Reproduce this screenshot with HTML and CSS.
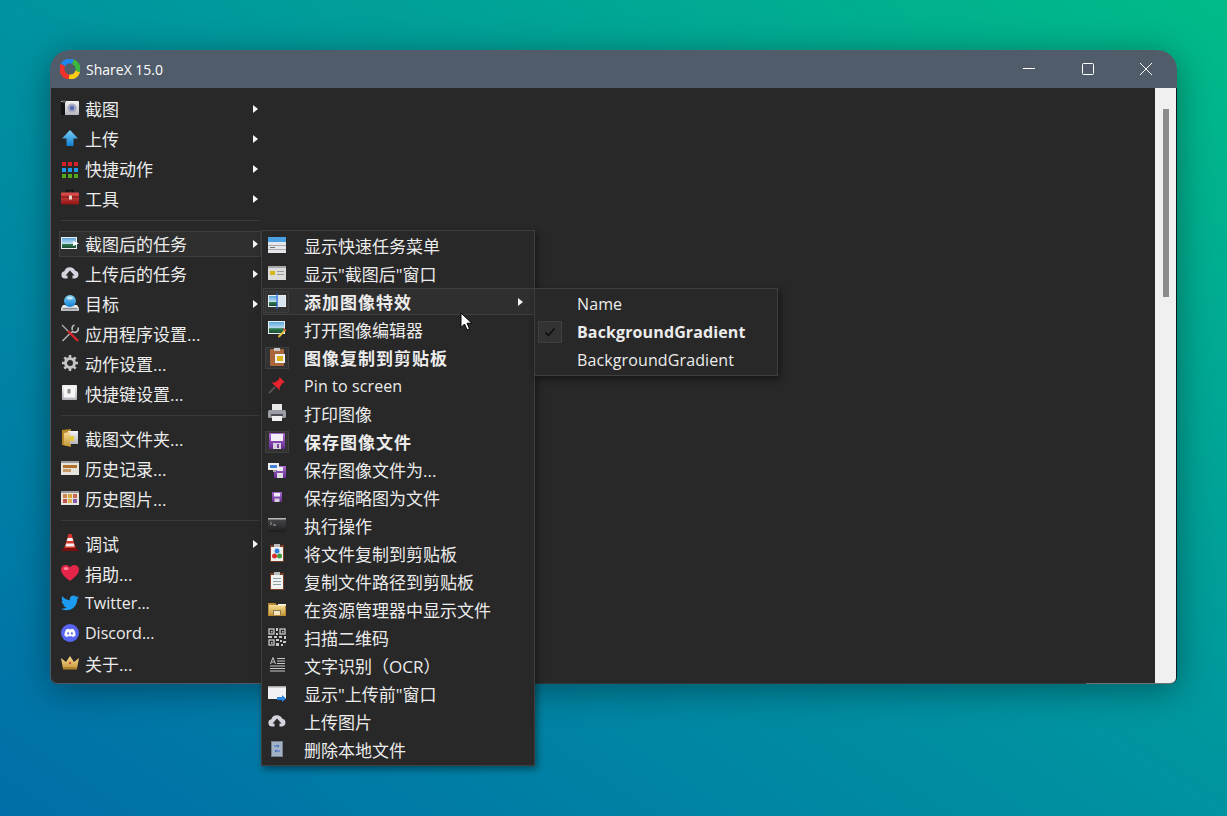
FILE: index.html
```html
<!DOCTYPE html>
<html lang="zh">
<head>
<meta charset="utf-8">
<title>ShareX 15.0</title>
<link rel="stylesheet" href="styles.css">
</head>
<body>
<svg class="defs" xmlns="http://www.w3.org/2000/svg">
  <defs>
    <linearGradient id="gBlue" x1="0" y1="0" x2="0" y2="1"><stop offset="0" stop-color="#7fd0f5"/><stop offset="1" stop-color="#0f7fd4"/></linearGradient>
    <linearGradient id="gSilver" x1="0" y1="0" x2="0" y2="1"><stop offset="0" stop-color="#f4f4f6"/><stop offset="1" stop-color="#b4b6bc"/></linearGradient>
    <linearGradient id="gPic" x1="0" y1="0" x2="0" y2="1"><stop offset="0" stop-color="#5aa8dc"/><stop offset=".55" stop-color="#bcdcec"/><stop offset=".6" stop-color="#2f7f4f"/><stop offset="1" stop-color="#1c4a34"/></linearGradient>
    <linearGradient id="gRed" x1="0" y1="0" x2="0" y2="1"><stop offset="0" stop-color="#e0504f"/><stop offset="1" stop-color="#8e1414"/></linearGradient>
    <linearGradient id="gPurple" x1="0" y1="0" x2="0" y2="1"><stop offset="0" stop-color="#a96bd0"/><stop offset="1" stop-color="#642a90"/></linearGradient>
    <linearGradient id="gFolder" x1="0" y1="0" x2="0" y2="1"><stop offset="0" stop-color="#f6dc94"/><stop offset="1" stop-color="#c89a3c"/></linearGradient>
    <linearGradient id="gTerm" x1="0" y1="0" x2="0" y2="1"><stop offset="0" stop-color="#4a4a4c"/><stop offset="1" stop-color="#1e1e20"/></linearGradient>

    <symbol id="i-cam" viewBox="0 0 18 18"><rect x="0" y="2" width="18" height="14" rx="1" fill="url(#gSilver)"/><rect x="0" y="3" width="4" height="13" fill="#141414"/><rect x="1" y="1.500" width="4" height="2" fill="#666"/><circle cx="11" cy="9" r="4.500" fill="#a6a8c0"/><circle cx="11" cy="9" r="2.200" fill="#5a68b8"/></symbol>
    <symbol id="i-up" viewBox="0 0 18 18"><path d="M9 1 17 9.500H12.500V17H5.500V9.500H1Z" fill="url(#gBlue)"/></symbol>
    <symbol id="i-grid" viewBox="0 0 18 18"><g fill="#d8202c"><rect x="1" y="1" width="4" height="4"/><rect x="7" y="1" width="4" height="4"/><rect x="13" y="1" width="4" height="4"/></g><g fill="#1d9bea"><rect x="1" y="7" width="4" height="4"/><rect x="7" y="7" width="4" height="4"/><rect x="13" y="7" width="4" height="4"/></g><g fill="#55a81e"><rect x="1" y="13" width="4" height="4"/><rect x="7" y="13" width="4" height="4"/><rect x="13" y="13" width="4" height="4"/></g></symbol>
    <symbol id="i-box" viewBox="0 0 18 18"><path d="M6 4V1.500H12V4" fill="none" stroke="#111" stroke-width="1.500"/><rect x="0" y="3.500" width="18" height="12" rx="1" fill="url(#gRed)"/><rect x="0" y="7.500" width="18" height="1" fill="#6e0f0f"/><rect x="8" y="6.500" width="3" height="4" fill="#e8d8c8"/></symbol>
    <symbol id="i-after" viewBox="0 0 18 18"><rect x="0" y="3" width="16" height="12" fill="#e8eef2"/><rect x="1" y="4" width="14" height="10" fill="url(#gPic)"/><path d="M12 7 18 9.500 12 12Z" fill="#fff"/></symbol>
    <symbol id="i-cloud" viewBox="0 0 18 18"><path d="M4 14.500A3.700 3.700 0 0 1 3.300 7.200 5.900 5.900 0 0 1 14.300 6.800 3.900 3.900 0 0 1 14 14.500H11.500V11.500H13.500L9 6.500 4.500 11.500H6.500V14.500Z" fill="#d4d4de"/></symbol>
    <symbol id="i-dest" viewBox="0 0 18 18"><path d="M2 11H16L18 14V17H0V14Z" fill="url(#gSilver)"/><rect x="2" y="14" width="14" height="1.200" fill="#8a8c92"/><circle cx="9" cy="7" r="6" fill="url(#gBlue)"/><ellipse cx="9" cy="4" rx="3" ry="1.600" fill="#bfe6fa"/></symbol>
    <symbol id="i-tools" viewBox="0 0 18 18"><path d="M1 1 8 8" stroke="#b0b0b4" stroke-width="1.200" fill="none"/><path d="M9.500 9 1.500 17" stroke="#b5b5b5" stroke-width="1.500" fill="none"/><path d="M17 3.500A3.500 3.500 0 0 1 11.500 7.500L9.500 9.500M13.500 1A3.500 3.500 0 0 0 11.500 6" stroke="#c0c0c4" stroke-width="1.600" fill="none"/><path d="M7 7 17 17" stroke="#d8242c" stroke-width="2.400"/></symbol>
    <symbol id="i-gear" viewBox="0 0 18 18"><circle cx="9" cy="9" r="4.500" fill="none" stroke="#c4c4c4" stroke-width="3"/><path d="M9 1V4M9 14V17M1 9H4M14 9H17M3.300 3.300 5.500 5.500M14.700 3.300 12.500 5.500M3.300 14.700 5.500 12.500M14.700 14.700 12.500 12.500" stroke="#c4c4c4" stroke-width="2.600"/></symbol>
    <symbol id="i-key" viewBox="0 0 18 18"><rect x="1" y="1" width="15" height="15" rx="1" fill="url(#gSilver)"/><rect x="3" y="2.500" width="11" height="11" fill="#f6f6f6"/><rect x="6.500" y="5" width="3" height="4.500" fill="#8c8c8c"/></symbol>
    <symbol id="i-folder" viewBox="0 0 18 18"><path d="M1 1 10 0V18L1 16Z" fill="#b88a2c"/><rect x="7" y="2" width="10" height="13" fill="url(#gSilver)"/><path d="M3 4 9 3V17L3 16Z" fill="url(#gFolder)"/><rect x="9" y="7" width="4" height="5" fill="#e2c93a"/></symbol>
    <symbol id="i-hist" viewBox="0 0 18 18"><rect x="0" y="2" width="18" height="14" fill="#e6e3dc"/><rect x="0" y="2" width="18" height="2" fill="#9a9a9a"/><rect x="2" y="6" width="14" height="3" fill="#b0702a"/><rect x="2" y="10" width="8" height="3" fill="#c89a68"/></symbol>
    <symbol id="i-himg" viewBox="0 0 18 18"><rect x="0" y="2" width="18" height="14" fill="#e6e3dc"/><rect x="0" y="2" width="18" height="2" fill="#9a9a9a"/><rect x="2" y="5" width="4" height="4" fill="#d08850"/><rect x="7" y="5" width="4" height="4" fill="#d8a838"/><rect x="12" y="5" width="4" height="4" fill="#c86a52"/><rect x="2" y="10" width="4" height="4" fill="#c05450"/><rect x="7" y="10" width="4" height="4" fill="#dcb04c"/><rect x="12" y="10" width="4" height="4" fill="#8a58a8"/></symbol>
    <symbol id="i-cone" viewBox="0 0 18 18"><path d="M7.500 0H10.500L15 15H3Z" fill="#d83a30"/><path d="M6.600 4H11.400L12.200 7H5.800ZM5.200 9.500H12.800L13.500 12.500H4.500Z" fill="#f2f2f2"/><path d="M0 17 3 14H15L18 17Z" fill="#7c0e0e"/></symbol>
    <symbol id="i-heart" viewBox="0 0 18 18"><path d="M9 17C4 13 0 10 0 5.500 0 2.500 2.200 1 4.500 1 6.500 1 8.200 2 9 3.500 9.800 2 11.500 1 13.500 1 15.800 1 18 2.500 18 5.500 18 10 14 13 9 17Z" fill="#e5254a"/><ellipse cx="5" cy="4.500" rx="2.500" ry="1.500" fill="#f6899c"/></symbol>
    <symbol id="i-tw" viewBox="0 0 24 24"><path fill="#1d9bf0" d="M23.953 4.57a10 10 0 01-2.825.775 4.958 4.958 0 002.163-2.723c-.951.555-2.005.959-3.127 1.184a4.92 4.92 0 00-8.384 4.482C7.69 8.095 4.067 6.13 1.64 3.162a4.822 4.822 0 00-.666 2.475c0 1.71.87 3.213 2.188 4.096a4.904 4.904 0 01-2.228-.616v.06a4.923 4.923 0 003.946 4.827 4.996 4.996 0 01-2.212.085 4.936 4.936 0 004.604 3.417 9.867 9.867 0 01-6.102 2.105c-.39 0-.779-.023-1.17-.067a13.995 13.995 0 007.557 2.209c9.053 0 13.998-7.496 13.998-13.985 0-.21 0-.42-.015-.63A9.935 9.935 0 0024 4.59z"/></symbol>
    <symbol id="i-dc" viewBox="0 0 36 36"><circle cx="18" cy="18" r="18" fill="#5865f2"/><g transform="translate(7 7) scale(.92)"><path fill="#fff" d="M20.317 4.3698a19.7913 19.7913 0 00-4.8851-1.5152.0741.0741 0 00-.0785.0371c-.211.3753-.4447.8648-.6083 1.2495-1.8447-.2762-3.68-.2762-5.4868 0-.1636-.3933-.4058-.8742-.6177-1.2495a.077.077 0 00-.0785-.037 19.7363 19.7363 0 00-4.8852 1.515.0699.0699 0 00-.0321.0277C.5334 9.0458-.319 13.5799.0992 18.0578a.0824.0824 0 00.0312.0561c2.0528 1.5076 4.0413 2.4228 5.9929 3.0294a.0777.0777 0 00.0842-.0276c.4616-.6304.8731-1.2952 1.226-1.9942a.076.076 0 00-.0416-.1057c-.6528-.2476-1.2743-.5495-1.8722-.8923a.077.077 0 01-.0076-.1277c.1258-.0943.2517-.1923.3718-.2914a.0743.0743 0 01.0776-.0105c3.9278 1.7933 8.18 1.7933 12.0614 0a.0739.0739 0 01.0785.0095c.1202.099.246.1981.3728.2924a.077.077 0 01-.0066.1276 12.2986 12.2986 0 01-1.873.8914.0766.0766 0 00-.0407.1067c.3604.698.7719 1.3628 1.225 1.9932a.076.076 0 00.0842.0286c1.961-.6067 3.9495-1.5219 6.0023-3.0294a.077.077 0 00.0313-.0552c.5004-5.177-.8382-9.6739-3.5485-13.6604a.061.061 0 00-.0312-.0286zM8.02 15.3312c-1.1825 0-2.1569-1.0857-2.1569-2.419 0-1.3332.9555-2.4189 2.157-2.4189 1.2108 0 2.1757 1.0952 2.1568 2.419 0 1.3332-.9555 2.4189-2.1569 2.4189zm7.9748 0c-1.1825 0-2.1569-1.0857-2.1569-2.419 0-1.3332.9554-2.4189 2.1569-2.4189 1.2108 0 2.1757 1.0952 2.1568 2.419 0 1.3332-.946 2.4189-2.1568 2.4189Z"/></g></symbol>
    <symbol id="i-crown" viewBox="0 0 18 18"><path d="M2 15 0 4 5 8 9 2 13 8 18 4 16 15Z" fill="url(#gFolder)"/><rect x="2" y="13" width="14" height="2.500" fill="#b0822c"/><circle cx="9" cy="9" r="1.200" fill="#d84a3a"/></symbol>

    <symbol id="i-quick" viewBox="0 0 18 18"><rect x="0" y="1" width="18" height="16" fill="#e4e6ea"/><rect x="0" y="1" width="18" height="5" fill="#4aa0e0"/><rect x="0" y="9" width="18" height="1" fill="#a8aab0"/><rect x="0" y="13" width="18" height="1" fill="#a8aab0"/><rect x="2" y="11" width="5" height="1" fill="#777"/></symbol>
    <symbol id="i-awin" viewBox="0 0 18 18"><rect x="0" y="2" width="18" height="14" fill="#dcdcd8"/><rect x="0" y="2" width="18" height="2" fill="#a8a8a8"/><rect x="2" y="7" width="5" height="4" fill="#d8b418"/><rect x="9" y="7" width="7" height="1" fill="#999"/><rect x="9" y="10" width="7" height="1" fill="#999"/></symbol>
    <symbol id="i-fx" viewBox="0 0 18 18"><rect x="0" y="3" width="18" height="12" fill="#e8eef2"/><rect x="1" y="4" width="16" height="10" fill="url(#gPic)"/><rect x="9" y="4" width="8" height="10" fill="#d8e4ee"/><rect x="8.500" y="1" width="1.200" height="16" fill="#2a62d8"/></symbol>
    <symbol id="i-edit" viewBox="0 0 18 18"><rect x="0" y="1" width="17" height="13" fill="#e8eef2"/><rect x="1" y="2" width="15" height="11" fill="url(#gPic)"/><path d="M17 9 18 10.500 12 17 10 17.800 10.500 15.500Z" fill="#e2c23c"/><path d="M16 8 18 10 17 11 15 9.500Z" fill="#d84a3a"/></symbol>
    <symbol id="i-clip" viewBox="0 0 18 18"><rect x="2" y="1" width="14" height="17" rx="1" fill="#a9663a"/><rect x="6" y="0" width="6" height="3" fill="#c8c8c8"/><rect x="7" y="6" width="10" height="9" fill="#f0f0f0"/><rect x="9" y="8" width="6" height="5" fill="#d8b418"/></symbol>
    <symbol id="i-pin" viewBox="0 0 18 18"><path d="M1 17 7 11" stroke="#555" stroke-width="1.800"/><path d="M11.500 1 17 6.500 14.500 7 11.500 11.500 12 14.500 3.500 6.500 6.500 6.500 11 3.500Z" fill="#e8232e"/></symbol>
    <symbol id="i-print" viewBox="0 0 18 18"><rect x="4" y="0" width="10" height="7" fill="#e8e8e8"/><rect x="0" y="6" width="18" height="8" rx="1.500" fill="#9a9da4"/><rect x="3" y="10" width="12" height="2" fill="#4c4e54"/><rect x="4" y="12" width="10" height="5" fill="#eef0f2"/></symbol>
    <symbol id="i-save" viewBox="0 0 18 18"><rect x="1" y="1" width="16" height="16" rx="1" fill="url(#gPurple)"/><rect x="3" y="2" width="12" height="7" fill="#f4eef8"/><rect x="5" y="11" width="8" height="6" fill="#d8d0e0"/><rect x="9" y="12" width="2" height="4" fill="#7a4a9a"/></symbol>
    <symbol id="i-saveas" viewBox="0 0 18 18"><rect x="6" y="6" width="12" height="12" fill="url(#gPurple)"/><rect x="9" y="7" width="6" height="4" fill="#eee"/><rect x="9" y="13" width="6" height="5" fill="#ddd"/><rect x="0" y="3" width="11" height="7" fill="#f0f0f0"/><rect x="2" y="5" width="7" height="3" fill="#3f82d8"/><rect x="5" y="10" width="3" height="2" fill="#aaa"/></symbol>
    <symbol id="i-thumb" viewBox="0 0 18 18"><rect x="4" y="4" width="10" height="10" rx="1" fill="url(#gPurple)"/><rect x="6" y="5" width="6" height="3.500" fill="#f0eaf6"/><rect x="6.500" y="10.500" width="5" height="3.500" fill="#d8d0e0"/></symbol>
    <symbol id="i-term" viewBox="0 0 18 18"><rect x="0" y="2" width="18" height="14" fill="url(#gTerm)"/><rect x="0" y="2" width="18" height="1.500" fill="#b8b8b8"/><path d="M2 6 4 7.500 2 9" stroke="#aaa" fill="none" stroke-width=".8"/><rect x="5" y="8.500" width="3" height="1" fill="#aaa"/></symbol>
    <symbol id="i-filec" viewBox="0 0 18 18"><rect x="2" y="1" width="14" height="17" fill="#7a3e22"/><rect x="3" y="3" width="12" height="14" fill="#f2f2f2"/><rect x="6" y="0" width="6" height="3" fill="#bcbcbc"/><circle cx="9" cy="7" r="2.500" fill="#2f7fd8"/><circle cx="6.500" cy="12" r="2.500" fill="#d83030"/><circle cx="11.500" cy="12" r="2.500" fill="#3f9a3a"/></symbol>
    <symbol id="i-pathc" viewBox="0 0 18 18"><rect x="2" y="1" width="14" height="17" fill="#7a3e22"/><rect x="3" y="3" width="12" height="14" fill="#f2f2f2"/><rect x="6" y="0" width="6" height="3" fill="#bcbcbc"/><g fill="#8aa0a8"><rect x="5" y="6" width="8" height="1"/><rect x="5" y="9" width="8" height="1"/><rect x="5" y="12" width="8" height="1"/></g></symbol>
    <symbol id="i-explorer" viewBox="0 0 18 18"><path d="M0 3H7L9 5H18V16H0Z" fill="#b88a34"/><rect x="1" y="5" width="16" height="10" fill="url(#gFolder)"/><rect x="5" y="10" width="8" height="5" fill="#8d7a50"/><rect x="6" y="11" width="6" height="4" fill="#f4e6c0"/><rect x="10" y="4" width="8" height="1.600" fill="#f6f6f0"/></symbol>
    <symbol id="i-qr" viewBox="0 0 18 18"><g fill="none" stroke="#c8c8c8" stroke-width="1.300"><rect x="1" y="1" width="5" height="5"/><rect x="12" y="1" width="5" height="5"/><rect x="1" y="12" width="5" height="5"/></g><g fill="#c8c8c8"><rect x="3" y="3" width="1.500" height="1.500"/><rect x="14" y="3" width="1.500" height="1.500"/><rect x="3" y="14" width="1.500" height="1.500"/><rect x="8" y="0" width="2" height="3"/><rect x="8" y="5" width="2" height="2"/><rect x="0" y="8" width="4" height="2"/><rect x="6" y="8" width="3" height="2"/><rect x="11" y="8" width="3" height="2"/><rect x="16" y="8" width="2" height="3"/><rect x="8" y="11" width="3" height="2"/><rect x="12" y="12" width="2" height="2"/><rect x="15" y="13" width="3" height="2"/><rect x="8" y="15" width="3" height="3"/><rect x="13" y="16" width="2" height="2"/></g></symbol>
    <symbol id="i-ocr" viewBox="0 0 18 18"><path d="M2.500 8 5 1.500 7.500 8M3.500 6H6.500" fill="none" stroke="#c8c8c8" stroke-width="1"/><g fill="#c8c8c8"><rect x="9" y="2" width="8" height="1"/><rect x="9" y="4.500" width="8" height="1"/><rect x="9" y="7" width="8" height="1"/><rect x="2" y="9.500" width="15" height="1"/><rect x="2" y="12" width="15" height="1"/><rect x="2" y="14.500" width="15" height="1"/></g></symbol>
    <symbol id="i-prewin" viewBox="0 0 18 18"><rect x="0" y="2" width="18" height="13" fill="#f0f2f6"/><rect x="0" y="2" width="18" height="1.500" fill="#a8a8a8"/><path d="M9 13H14V11L18 14.500 14 18V16H9Z" fill="#2a86e0"/></symbol>
    <symbol id="i-del" viewBox="0 0 18 18"><rect x="3" y="1" width="12" height="16" fill="#74808e"/><rect x="4" y="2" width="10" height="14" fill="#a4b2c6"/><path d="M6 6H11M11 6 9.500 5M11 6 9.500 7M12 11H7M7 11 8.500 10M7 11 8.500 12" stroke="#3060c8" stroke-width=".9" fill="none"/></symbol>
  </defs>
</svg>

<div class="window">
  <header class="titlebar">
    <svg class="logo" viewBox="0 0 20 20" aria-hidden="true">
      <g fill="none" stroke-width="5">
        <path d="M3 6A8 8 0 0 1 13 2.600" stroke="#1e88f0"/>
        <path d="M13 2.600A8 8 0 0 1 17.700 12.500" stroke="#3cb83e"/>
        <path d="M17.700 12.500A8 8 0 0 1 9 18" stroke="#ffcb14"/>
        <path d="M9 18A8 8 0 0 1 3 6" stroke="#f0322a"/>
      </g>
    </svg>
    <span class="title">ShareX 15.0</span>
    <div class="controls">
      <span class="ctl"><svg width="14" height="14" viewBox="0 0 14 14"><path d="M1 6.500H13" stroke="#fff"/></svg></span>
      <span class="ctl"><svg width="14" height="14" viewBox="0 0 14 14"><rect x="1.500" y="1.500" width="11" height="11" rx="1" fill="none" stroke="#fff"/></svg></span>
      <span class="ctl"><svg width="14" height="14" viewBox="0 0 14 14"><path d="M1 1 13 13M13 1 1 13" stroke="#fff"/></svg></span>
    </div>
  </header>

  <div class="client">
    <nav class="mainmenu">
      <div class="row"><svg class="ic"><use href="#i-cam"/></svg><span>截图</span><i class="tri"></i></div>
      <div class="row"><svg class="ic"><use href="#i-up"/></svg><span>上传</span><i class="tri"></i></div>
      <div class="row"><svg class="ic low"><use href="#i-grid"/></svg><span>快捷动作</span><i class="tri"></i></div>
      <div class="row"><svg class="ic"><use href="#i-box"/></svg><span>工具</span><i class="tri"></i></div>
      <div class="sep"></div>
      <div class="row on"><svg class="ic"><use href="#i-after"/></svg><span>截图后的任务</span><i class="tri"></i></div>
      <div class="row"><svg class="ic"><use href="#i-cloud"/></svg><span>上传后的任务</span><i class="tri"></i></div>
      <div class="row"><svg class="ic"><use href="#i-dest"/></svg><span>目标</span><i class="tri"></i></div>
      <div class="row"><svg class="ic"><use href="#i-tools"/></svg><span>应用程序设置...</span></div>
      <div class="row"><svg class="ic"><use href="#i-gear"/></svg><span>动作设置...</span></div>
      <div class="row"><svg class="ic"><use href="#i-key"/></svg><span>快捷键设置...</span></div>
      <div class="sep"></div>
      <div class="row"><svg class="ic"><use href="#i-folder"/></svg><span>截图文件夹...</span></div>
      <div class="row"><svg class="ic"><use href="#i-hist"/></svg><span>历史记录...</span></div>
      <div class="row"><svg class="ic"><use href="#i-himg"/></svg><span>历史图片...</span></div>
      <div class="sep"></div>
      <div class="row"><svg class="ic"><use href="#i-cone"/></svg><span>调试</span><i class="tri"></i></div>
      <div class="row"><svg class="ic"><use href="#i-heart"/></svg><span>捐助...</span></div>
      <div class="row"><svg class="ic"><use href="#i-tw"/></svg><span class="en">Twitter...</span></div>
      <div class="row"><svg class="ic"><use href="#i-dc"/></svg><span class="en">Discord...</span></div>
      <div class="row"><svg class="ic"><use href="#i-crown"/></svg><span>关于...</span></div>
    </nav>
    <main class="canvas"></main>
    <div class="scrollbar"><div class="thumb"></div></div>
  </div>

  <div class="popup tasks">
    <div class="mi"><b class="box"><svg class="ic"><use href="#i-quick"/></svg></b><span>显示快速任务菜单</span></div>
    <div class="mi"><b class="box"><svg class="ic"><use href="#i-awin"/></svg></b><span>显示"截图后"窗口</span></div>
    <div class="mi on"><b class="box chk"><svg class="ic"><use href="#i-fx"/></svg></b><span class="bold cjk">添加图像特效</span><i class="tri"></i></div>
    <div class="mi"><b class="box"><svg class="ic"><use href="#i-edit"/></svg></b><span>打开图像编辑器</span></div>
    <div class="mi"><b class="box chk"><svg class="ic"><use href="#i-clip"/></svg></b><span class="bold cjk">图像复制到剪贴板</span></div>
    <div class="mi"><b class="box"><svg class="ic"><use href="#i-pin"/></svg></b><span class="en wide">Pin to screen</span></div>
    <div class="mi"><b class="box"><svg class="ic"><use href="#i-print"/></svg></b><span>打印图像</span></div>
    <div class="mi"><b class="box chk"><svg class="ic"><use href="#i-save"/></svg></b><span class="bold cjk">保存图像文件</span></div>
    <div class="mi"><b class="box"><svg class="ic"><use href="#i-saveas"/></svg></b><span>保存图像文件为...</span></div>
    <div class="mi"><b class="box"><svg class="ic"><use href="#i-thumb"/></svg></b><span>保存缩略图为文件</span></div>
    <div class="mi"><b class="box"><svg class="ic"><use href="#i-term"/></svg></b><span>执行操作</span></div>
    <div class="mi"><b class="box"><svg class="ic"><use href="#i-filec"/></svg></b><span>将文件复制到剪贴板</span></div>
    <div class="mi"><b class="box"><svg class="ic"><use href="#i-pathc"/></svg></b><span>复制文件路径到剪贴板</span></div>
    <div class="mi"><b class="box"><svg class="ic"><use href="#i-explorer"/></svg></b><span>在资源管理器中显示文件</span></div>
    <div class="mi"><b class="box"><svg class="ic"><use href="#i-qr"/></svg></b><span>扫描二维码</span></div>
    <div class="mi"><b class="box"><svg class="ic"><use href="#i-ocr"/></svg></b><span>文字识别（OCR）</span></div>
    <div class="mi"><b class="box"><svg class="ic"><use href="#i-prewin"/></svg></b><span>显示"上传前"窗口</span></div>
    <div class="mi"><b class="box"><svg class="ic"><use href="#i-cloud"/></svg></b><span>上传图片</span></div>
    <div class="mi"><b class="box"><svg class="ic"><use href="#i-del"/></svg></b><span>删除本地文件</span></div>
  </div>

  <div class="popup effects">
    <div class="mi"><b class="box"></b><span class="en wide">Name</span></div>
    <div class="mi"><b class="box chk"><svg class="tick" viewBox="0 0 12 12"><path d="M1.500 6.500 4.500 9.500 10.500 2.500" fill="none" stroke="#111" stroke-width="1.800"/></svg></b><span class="en bold wide">BackgroundGradient</span></div>
    <div class="mi"><b class="box"></b><span class="en wide">BackgroundGradient</span></div>
  </div>
</div>

<svg class="cursor" viewBox="0 0 13 19"><path d="M1 1V15.500L4.500 12 7 17.800 9.500 16.700 7 11.200H11.800Z" fill="#fff" stroke="#000"/></svg>
</body>
</html>
```

FILE: styles.css
```css
* { box-sizing: border-box; }

html, body { height: 100%; }

body {
  margin: 0;
  overflow: hidden;
  background: linear-gradient(to top right, #006ea8 0%, #0093a0 50%, #00bb88 100%);
  font-family: "Open Sans", "Noto Sans CJK SC", sans-serif;
  font-size: 17px;
  color: #ececec;
}

.defs { display: block; width: 0; height: 0; }

/* window on the desktop */
.window {
  position: absolute;
  left: 50px;
  top: 50px;
  width: 1127px;
  height: 634px;
  display: flex;
  flex-direction: column;
  border-radius: 20px 20px 7px 7px;
  box-shadow: 0 6px 34px rgba(0, 0, 0, .38);
}

.titlebar {
  flex: none;
  height: 38px;
  display: flex;
  align-items: center;
  padding-left: 10px;
  background: #515c6b;
  border-radius: 20px 20px 0 0;
}

.logo { width: 20px; height: 20px; flex: none; }

.title {
  margin-left: 6px;
  font-family: "Open Sans", sans-serif;
  font-size: 14px;
  color: #fff;
}

.controls { margin-left: auto; display: flex; padding-right: 1.5px; }

.ctl {
  width: 58.5px;
  height: 38px;
  display: flex;
  align-items: center;
  justify-content: center;
}

.client {
  flex: 1;
  min-height: 0;
  display: flex;
  background: #0e1822;
  border-left: 1px solid #4e5a68;
  border-right: 1px solid #0e1822;
  border-radius: 0 0 7px 7px;
}

.mainmenu {
  flex: none;
  width: 210px;
  padding: 6px 0 0 8px;
  display: flex;
  flex-direction: column;
  background: #282828;
  border-bottom: 1px solid #4e5a68;
  border-radius: 0 0 0 7px;
}

.row {
  flex: none;
  height: 26px;
  margin: 2px 0;
  padding-left: 1px;
  display: flex;
  align-items: center;
  border: 1px solid transparent;
}

.row .ic { margin-right: 6px; margin-top: -3px; }

.row .ic.low { margin-top: 2px; }

.row span { margin-top: -2px; }

.row.on, .mi.on { background: #2f2f2f; border-color: #3e3e3e; }

.row .tri { margin-left: auto; margin-right: 2px; }

.tri {
  flex: none;
  width: 0;
  height: 0;
  border-left: 5px solid #f4f4f4;
  border-top: 4.5px solid transparent;
  border-bottom: 4.5px solid transparent;
}

.ic { width: 18px; height: 18px; flex: none; display: block; }

.sep {
  flex: none;
  height: 1px;
  margin: 6px 1px 8px 2px;
  background: #3a3a3a;
}

.canvas {
  flex: 1;
  background:
    linear-gradient(to right, #2f383c calc(100% - 69px), #6a7378 0) bottom / 100% 1px no-repeat,
    #282828;
}

.scrollbar {
  flex: none;
  width: 21px;
  padding: 21px 7px 0 8px;
  background: #f0f0f0;
  border-bottom: 1px solid #6a7378;
  border-radius: 0 0 6px 0;
}

.thumb { width: 6px; height: 188px; background: #8b8b8b; }

/* popups lie over the window */
.popup {
  position: absolute;
  background: #282828;
  border: 1px solid #3f3f3f;
  padding: 1px 0;
  box-shadow: 2px 3px 7px rgba(0, 0, 0, .45);
}

.tasks { left: 211px; top: 180px; width: 274px; }

.effects { left: 484px; top: 238px; width: 244px; }

.mi {
  height: 27px;
  margin: 0 0 1px 1px;
  display: flex;
  align-items: center;
  border: 1px solid transparent;
  border-right: 0;
}

.mi .ic { margin-top: -2px; }

.box {
  flex: none;
  width: 24px;
  height: 22px;
  margin: 0 15px 0 1px;
  display: flex;
  align-items: center;
  justify-content: center;
  border: 1px solid transparent;
  font-weight: normal;
}

.box.chk { background: #333; border-color: #3f3f3f; }

.tick { width: 12px; height: 12px; }

.mi .tri { margin-left: auto; margin-right: 11px; }

.bold { font-weight: 700; }

.cjk { letter-spacing: 1px; }

.en { font-size: 16px; }

.wide { letter-spacing: .12px; }

.cursor {
  position: absolute;
  left: 460px;
  top: 312px;
  width: 13px;
  height: 19px;
}
```
